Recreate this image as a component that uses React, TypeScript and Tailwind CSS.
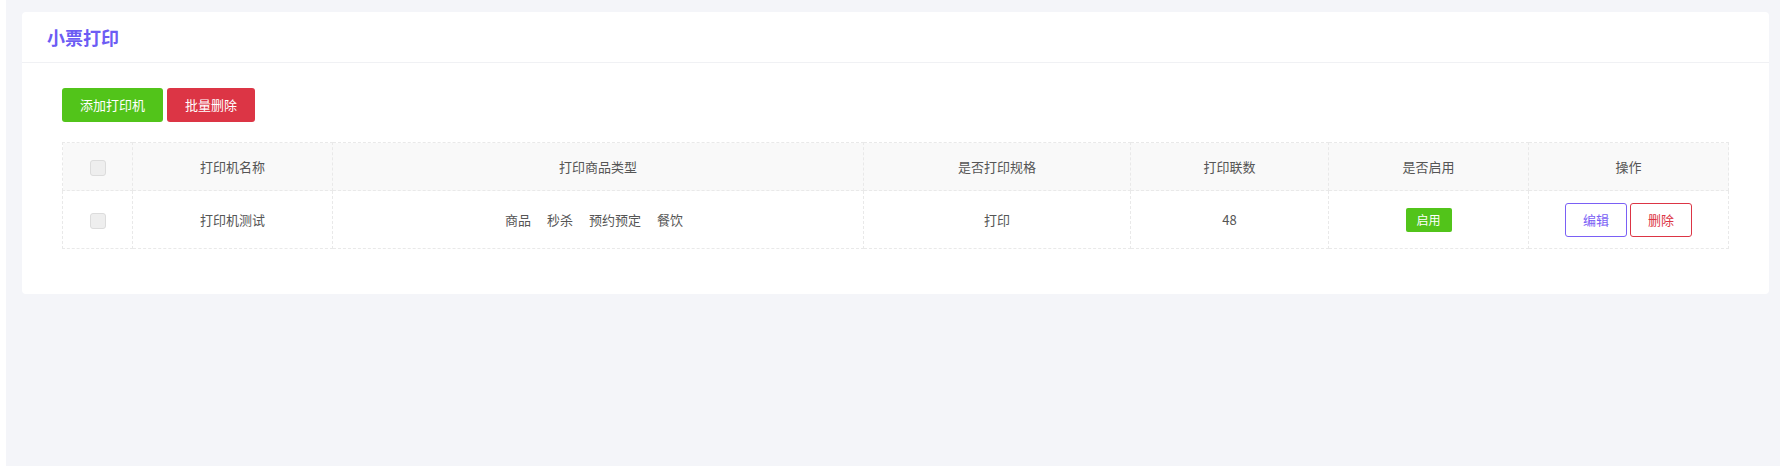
import React from 'react';

const cols = [
  { key: 'check', width: 'w-[70px]' },
  { key: 'name', label: '打印机名称', width: 'w-[200px]' },
  { key: 'types', label: '打印商品类型', width: 'w-[531px]' },
  { key: 'spec', label: '是否打印规格', width: 'w-[267px]' },
  { key: 'copies', label: '打印联数', width: 'w-[198px]' },
  { key: 'enabled', label: '是否启用', width: 'w-[200px]' },
  { key: 'ops', label: '操作', width: 'w-[200px]' },
];

const printers = [
  { id: 1, name: '打印机测试', types: ['商品', '秒杀', '预约预定', '餐饮'], spec: '打印', copies: 48, enabled: true },
];

function Checkbox() {
  return <span className="inline-block w-4 h-4 rounded-[3px] border border-[#dcdcdc] bg-[#eeeeee] align-middle" />;
}

export default function App() {
  const cell = 'border border-dashed border-[#e9e9e9] text-center align-middle';

  return (
    <div
      className="flex h-[466px] overflow-hidden w-full text-[13px] text-[#555]"
      style={{ fontFamily: '"Noto Sans CJK SC", "Noto Sans", sans-serif' }}
    >
      <div className="w-[6px] bg-white shrink-0" />
      <div className="flex-1 bg-[#f4f5f9] pt-3 pl-4 pr-3">
        <div className="bg-white rounded-[4px]">
          <div className="h-[51px] flex items-center pl-[25px] border-b border-[#f0f1f4]">
            <h1 className="text-[18px] font-bold text-[#6c5cf4] leading-none">小票打印</h1>
          </div>

          <div className="px-10 pt-[25px] pb-[45px]">
            <div className="flex gap-1">
              <button className="h-[34px] w-[101px] rounded-[3px] bg-[#52c41a] text-white text-[13px]">添加打印机</button>
              <button className="h-[34px] w-[88px] rounded-[3px] bg-[#dc3545] text-white text-[13px]">批量删除</button>
            </div>

            <table className="mt-5 w-full border-collapse table-fixed">
              <thead>
                <tr className="bg-[#f9f9f9] h-[48px]">
                  {cols.map((c) => (
                    <th key={c.key} className={`${cell} ${c.width} font-normal`}>
                      {c.key === 'check' ? <Checkbox /> : c.label}
                    </th>
                  ))}
                </tr>
              </thead>
              <tbody>
                {printers.map((p) => (
                  <tr key={p.id} className="h-[58px]">
                    <td className={cell}><Checkbox /></td>
                    <td className={cell}>{p.name}</td>
                    <td className={cell}>
                      <div className="flex justify-center gap-[16px] pr-2">
                        {p.types.map((t) => <span key={t}>{t}</span>)}
                      </div>
                    </td>
                    <td className={cell}>{p.spec}</td>
                    <td className={cell}>{p.copies}</td>
                    <td className={cell}>
                      {p.enabled && (
                        <span className="inline-flex items-center justify-center h-6 w-[46px] rounded-[2px] bg-[#52c41a] text-white text-[12px]">启用</span>
                      )}
                    </td>
                    <td className={cell}>
                      <div className="flex justify-center gap-[3px]">
                        <button className="h-[34px] w-[62px] rounded-[3px] border border-[#7a60f5] text-[#7a60f5] bg-white">编辑</button>
                        <button className="h-[34px] w-[62px] rounded-[3px] border border-[#dc3545] text-[#dc3545] bg-white">删除</button>
                      </div>
                    </td>
                  </tr>
                ))}
              </tbody>
            </table>
          </div>
        </div>
      </div>
    </div>
  );
}
